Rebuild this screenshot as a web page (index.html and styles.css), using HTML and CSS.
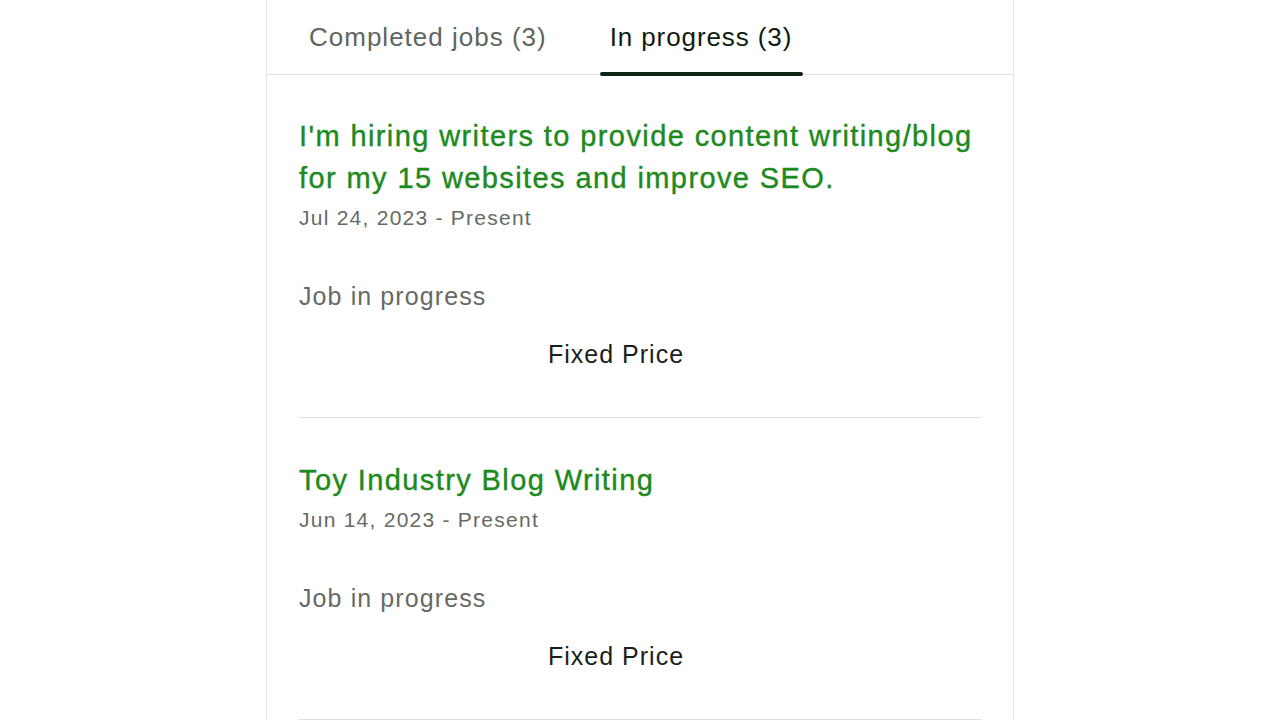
FILE: index.html
```html
<!DOCTYPE html>
<html lang="en">
<head>
<meta charset="utf-8">
<title>Work history</title>
<link rel="stylesheet" href="styles.css">
</head>
<body>
<div class="card">
  <div class="tabs">
    <div class="tab">Completed jobs (3)</div>
    <div class="tab active">In progress (3)</div>
  </div>
  <div class="jobs">
    <div class="job">
      <h3 class="job-title">I'm hiring writers to provide content writing/blog for my 15 websites and improve SEO.</h3>
      <div class="job-dates">Jul 24, 2023 - Present</div>
      <div class="job-status">Job in progress</div>
      <div class="job-meta"><span class="budget"></span><span class="type">Fixed Price</span></div>
    </div>
    <div class="job">
      <h3 class="job-title">Toy Industry Blog Writing</h3>
      <div class="job-dates">Jun 14, 2023 - Present</div>
      <div class="job-status">Job in progress</div>
      <div class="job-meta"><span class="budget"></span><span class="type">Fixed Price</span></div>
    </div>
  </div>
</div>
</body>
</html>
```

FILE: styles.css
```css
html, body {
  margin: 0;
  padding: 0;
  background: #ffffff;
}

body {
  font-family: "Liberation Sans", Arial, sans-serif;
  color: #001e00;
}

.card {
  width: 746px;
  height: 720px;
  margin: 0 auto;
  border-left: 1px solid #e4e4e4;
  border-right: 1px solid #e4e4e4;
  overflow: hidden;
}

.tabs {
  display: flex;
  gap: 42px;
  padding: 0 32px;
  height: 74px;
  border-bottom: 1px solid #e0e0e0;
}

.tab {
  position: relative;
  display: flex;
  align-items: center;
  padding: 0 11px 0 10px;
  font-size: 26px;
  letter-spacing: 1px;
  color: #5e6660;
}

.tab.active {
  color: #0f1a10;
  letter-spacing: 0.9px;
}

.tab.active::after {
  content: "";
  position: absolute;
  left: 0;
  right: 0;
  bottom: -2px;
  height: 4px;
  border-radius: 2px;
  background: #0d2412;
}

.jobs {
  padding: 0 32px;
}

.job {
  padding: 40px 0 47px;
  border-bottom: 1px solid #dedede;
}

.job + .job {
  padding-top: 41px;
}

.job-title {
  margin: 0;
  font-size: 29px;
  line-height: 42px;
  letter-spacing: 1.4px;
  font-weight: normal;
  -webkit-text-stroke: 0.4px #1d8a1d;
  color: #1d8a1d;
}

.job-dates {
  margin-top: 5px;
  font-size: 21px;
  line-height: 28px;
  letter-spacing: 1.25px;
  color: #666a66;
}

.job-status {
  margin-top: 48px;
  font-size: 25px;
  line-height: 32px;
  letter-spacing: 1.1px;
  color: #666a66;
}

.job-meta {
  margin-top: 26px;
  display: grid;
  grid-template-columns: 249px auto;
  font-size: 25px;
  line-height: 32px;
  letter-spacing: 1px;
  color: #1a1f1a;
}
```
